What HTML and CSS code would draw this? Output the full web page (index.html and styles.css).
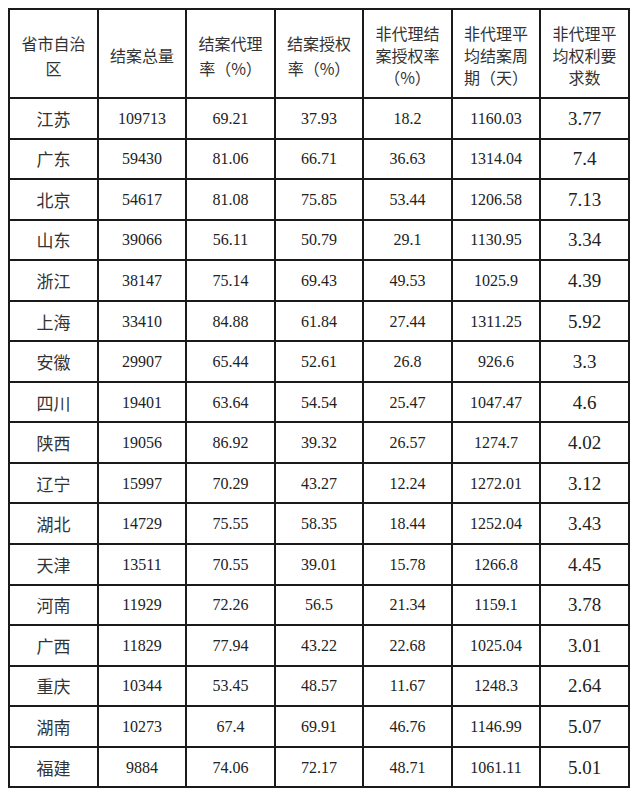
FILE: index.html
```html
<!DOCTYPE html>
<html lang="zh">
<head>
<meta charset="utf-8">
<link rel="stylesheet" href="styles.css">
</head>
<body>
<table class="data">
  <colgroup>
    <col class="c89"><col class="c88"><col class="c89"><col class="c88"><col class="c89"><col class="c88"><col class="c89">
  </colgroup>
  <thead>
    <tr class="head">
      <th class="two">省市自治<br>区</th>
      <th class="two">结案总量</th>
      <th class="two">结案代理<br>率（%）</th>
      <th class="two">结案授权<br>率（%）</th>
      <th class="three">非代理结<br>案授权率<br>（%）</th>
      <th class="three">非代理平<br>均结案周<br>期（天）</th>
      <th class="three">非代理平<br>均权利要<br>求数</th>
    </tr>
  </thead>
  <tbody>
    <tr><td class="name">江苏</td><td>109713</td><td>69.21</td><td>37.93</td><td>18.2</td><td>1160.03</td><td class="big">3.77</td></tr>
    <tr><td class="name">广东</td><td>59430</td><td>81.06</td><td>66.71</td><td>36.63</td><td>1314.04</td><td class="big">7.4</td></tr>
    <tr><td class="name">北京</td><td>54617</td><td>81.08</td><td>75.85</td><td>53.44</td><td>1206.58</td><td class="big">7.13</td></tr>
    <tr><td class="name">山东</td><td>39066</td><td>56.11</td><td>50.79</td><td>29.1</td><td>1130.95</td><td class="big">3.34</td></tr>
    <tr><td class="name">浙江</td><td>38147</td><td>75.14</td><td>69.43</td><td>49.53</td><td>1025.9</td><td class="big">4.39</td></tr>
    <tr><td class="name">上海</td><td>33410</td><td>84.88</td><td>61.84</td><td>27.44</td><td>1311.25</td><td class="big">5.92</td></tr>
    <tr><td class="name">安徽</td><td>29907</td><td>65.44</td><td>52.61</td><td>26.8</td><td>926.6</td><td class="big">3.3</td></tr>
    <tr><td class="name">四川</td><td>19401</td><td>63.64</td><td>54.54</td><td>25.47</td><td>1047.47</td><td class="big">4.6</td></tr>
    <tr><td class="name">陕西</td><td>19056</td><td>86.92</td><td>39.32</td><td>26.57</td><td>1274.7</td><td class="big">4.02</td></tr>
    <tr><td class="name">辽宁</td><td>15997</td><td>70.29</td><td>43.27</td><td>12.24</td><td>1272.01</td><td class="big">3.12</td></tr>
    <tr><td class="name">湖北</td><td>14729</td><td>75.55</td><td>58.35</td><td>18.44</td><td>1252.04</td><td class="big">3.43</td></tr>
    <tr><td class="name">天津</td><td>13511</td><td>70.55</td><td>39.01</td><td>15.78</td><td>1266.8</td><td class="big">4.45</td></tr>
    <tr><td class="name">河南</td><td>11929</td><td>72.26</td><td>56.5</td><td>21.34</td><td>1159.1</td><td class="big">3.78</td></tr>
    <tr><td class="name">广西</td><td>11829</td><td>77.94</td><td>43.22</td><td>22.68</td><td>1025.04</td><td class="big">3.01</td></tr>
    <tr><td class="name">重庆</td><td>10344</td><td>53.45</td><td>48.57</td><td>11.67</td><td>1248.3</td><td class="big">2.64</td></tr>
    <tr><td class="name">湖南</td><td>10273</td><td>67.4</td><td>69.91</td><td>46.76</td><td>1146.99</td><td class="big">5.07</td></tr>
    <tr><td class="name">福建</td><td>9884</td><td>74.06</td><td>72.17</td><td>48.71</td><td>1061.11</td><td class="big">5.01</td></tr>
  </tbody>
</table>
</body>
</html>
```

FILE: styles.css
```css
html, body {
  background: #ffffff;
}
body {
  margin: 8px;
  color: #222222;
  font-family: "Liberation Serif", "Noto Sans CJK SC", serif;
}
.data {
  border-collapse: separate;
  border-spacing: 0;
  table-layout: fixed;
  width: 622px;
  border-top: 2px solid #1a1a1a;
  border-left: 2px solid #1a1a1a;
}
.c89 { width: 89px; }
.c88 { width: 88px; }
.data th,
.data td {
  box-sizing: border-box;
  padding: 0;
  border-right: 2px solid #1a1a1a;
  border-bottom: 2px solid #1a1a1a;
  text-align: center;
  vertical-align: middle;
}
.head {
  height: 89px;
}
.data th {
  font-family: "Noto Sans CJK SC", sans-serif;
  font-weight: 400;
  font-size: 16px;
  color: #333333;
}
.data th.two {
  line-height: 24.5px;
  padding-top: 4px;
}
.data th.three {
  line-height: 22px;
  padding-top: 2px;
}
.data tbody tr {
  height: 40.55px;
}
.data td {
  font-size: 16px;
  line-height: 20px;
  padding-top: 1px;
}
.data td.name {
  font-family: "Noto Sans CJK SC", sans-serif;
  font-size: 17px;
  color: #333333;
}
.data td.big {
  font-size: 19px;
}
```
